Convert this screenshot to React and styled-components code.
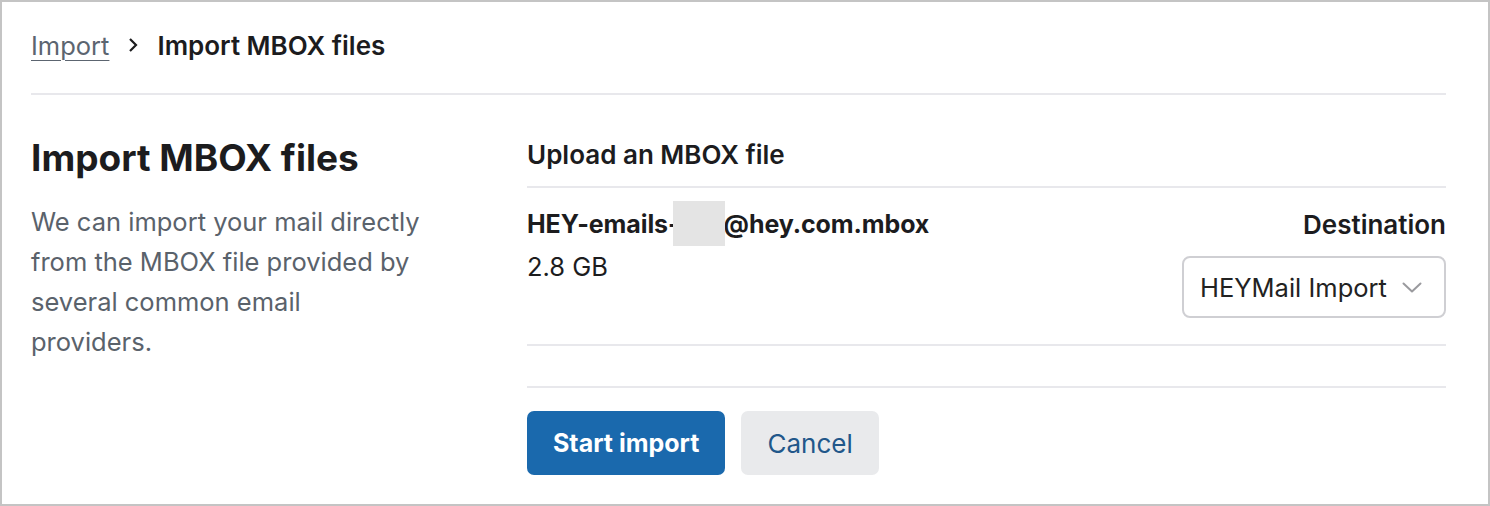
import React from "react";
import styled, { createGlobalStyle } from "styled-components";

const GlobalStyle = createGlobalStyle`
  html, body {
    margin: 0;
    padding: 0;
    background: #ffffff;
  }
  body {
    font-family: Inter, "Open Sans", Arial, sans-serif;
    color: #1c1c1e;
    -webkit-font-smoothing: antialiased;
  }
`;

const Frame = styled.div`
  box-sizing: border-box;
  width: 1490px;
  height: 506px;
  border: 2px solid #c4c4c4;
  padding: 0 42px 0 29px;
  background: #fff;
`;

const Breadcrumb = styled.nav`
  box-sizing: border-box;
  display: flex;
  align-items: center;
  gap: 18px;
  height: 93px;
  padding-bottom: 5px;
  border-bottom: 2px solid #e8e8ec;
  font-size: 25.5px;
`;

const Crumb = styled.a`
  color: #5c6570;
  text-decoration: underline;
  text-underline-offset: 5px;
  text-decoration-thickness: 1px;
`;

const Current = styled.span`
  font-weight: 600;
  color: #1c1c1e;
  font-size: 26px;
`;

const Main = styled.div`
  display: grid;
  grid-template-columns: 430px 1fr;
  column-gap: 66px;
  padding-top: 40px;
`;

const Intro = styled.section`
  display: flex;
  flex-direction: column;
`;

const Title = styled.h1`
  margin: 0 0 21px;
  font-size: 37px;
  font-weight: 700;
  line-height: 46px;
  color: #1c1c1e;
`;

const Lead = styled.p`
  margin: 0;
  max-width: 392px;
  font-size: 25.5px;
  line-height: 40px;
  color: #5a626b;
`;

const Form = styled.section`
  display: flex;
  flex-direction: column;
`;

const SectionLabel = styled.h2`
  margin: 0;
  padding: 5px 0 16px;
  font-size: 26px;
  font-weight: 600;
  line-height: 30px;
  border-bottom: 2px solid #e8e8ec;
`;

const FileRow = styled.div`
  display: flex;
  justify-content: space-between;
  align-items: flex-start;
  padding: 13px 0 26px;
  border-bottom: 2px solid #e8e8ec;
`;

const FileInfo = styled.div`
  display: flex;
  flex-direction: column;
  gap: 6px;
`;

const FileName = styled.div`
  display: flex;
  align-items: center;
  height: 45px;
  font-size: 25px;
  font-weight: 700;
  line-height: 30px;
  letter-spacing: -0.1px;
`;

const Redacted = styled.span`
  display: inline-block;
  width: 52px;
  height: 45px;
  margin: 0 -1px 0 -7px;
  background: #e4e4e4;
  filter: blur(0.6px);
`;

const FileSize = styled.div`
  font-size: 25.5px;
  line-height: 30px;
`;

const Destination = styled.div`
  display: flex;
  flex-direction: column;
  align-items: flex-end;
  gap: 16px;
  padding-top: 9px;
`;

const FieldLabel = styled.label`
  font-size: 26px;
  font-weight: 600;
  line-height: 30px;
`;

const Select = styled.div`
  box-sizing: border-box;
  display: flex;
  align-items: center;
  gap: 12px;
  width: 264px;
  height: 62px;
  padding: 0 22px 0 16px;
  border: 2px solid #cfcfd3;
  border-radius: 8px;
  font-size: 25.5px;
  color: #222;
`;

const SelectText = styled.span`
  flex: 1;
  white-space: nowrap;
`;

const Spacer = styled.div`
  height: 40px;
  border-bottom: 2px solid #e8e8ec;
`;

const Actions = styled.div`
  display: flex;
  gap: 16px;
  padding-top: 23px;
`;

const Button = styled.button`
  box-sizing: border-box;
  height: 64px;
  padding: 0 26px;
  border: none;
  border-radius: 7px;
  font-family: inherit;
  font-size: ${({ $primary }) => ($primary ? "25px" : "26px")};
  cursor: pointer;
  background: ${({ $primary }) => ($primary ? "#1a69ad" : "#e9eaec")};
  color: ${({ $primary }) => ($primary ? "#ffffff" : "#21578a")};
  font-weight: ${({ $primary }) => ($primary ? 700 : 400)};
`;

const Chevron = () => (
  <svg width="20" height="11" viewBox="0 0 20 11" fill="none">
    <path d="M1.5 1.5 L10 9.5 L18.5 1.5" stroke="#9a9a9e" strokeWidth="2" strokeLinecap="round" strokeLinejoin="round" />
  </svg>
);

const App = () => {
  return (
    <>
      <GlobalStyle />
      <Frame>
        <Breadcrumb>
          <Crumb href="#">Import</Crumb>
          <svg width="12" height="16" viewBox="0 0 12 16" fill="none">
            <path d="M3 2 L9 8 L3 14" stroke="#1c1c1e" strokeWidth="2.2" />
          </svg>
          <Current>Import MBOX files</Current>
        </Breadcrumb>

        <Main>
          <Intro>
            <Title>Import MBOX files</Title>
            <Lead>
              We can import your mail directly from the MBOX file provided by
              several common email providers.
            </Lead>
          </Intro>

          <Form>
            <SectionLabel>Upload an MBOX file</SectionLabel>
            <FileRow>
              <FileInfo>
                <FileName>
                  HEY-emails-
                  <Redacted />
                  @hey.com.mbox
                </FileName>
                <FileSize>2.8 GB</FileSize>
              </FileInfo>
              <Destination>
                <FieldLabel>Destination</FieldLabel>
                <Select>
                  <SelectText>HEYMail Import</SelectText>
                  <Chevron />
                </Select>
              </Destination>
            </FileRow>
            <Spacer />
            <Actions>
              <Button $primary>Start import</Button>
              <Button>Cancel</Button>
            </Actions>
          </Form>
        </Main>
      </Frame>
    </>
  );
};

export default App;
